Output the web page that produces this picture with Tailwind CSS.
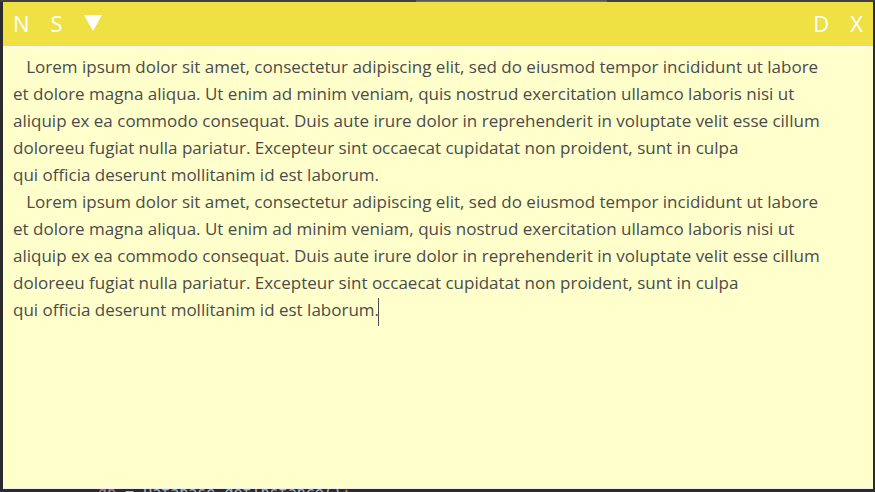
<!DOCTYPE html>
<html lang="en">
<head>
<meta charset="utf-8">
<title>Sticky note</title>
<script src="https://cdn.jsdelivr.net/npm/@tailwindcss/browser@4"></script>
</head>
<body class="relative flex h-screen flex-col overflow-hidden bg-[#2b2b2e] pt-[2px] pr-[2px] pb-[3px] pl-[3px] font-['Open_Sans','Noto_Sans',sans-serif]">
  <!-- editor window behind the note -->
  <div class="absolute inset-x-0 top-0 h-[2px] bg-[#3f3f41]"><div class="mr-[268px] ml-auto h-[2px] w-[191px] border-b border-[#4f7775] bg-[#58585a]"></div></div>
  <div class="absolute inset-x-0 bottom-0 h-[3px] overflow-hidden pl-[98px]" aria-hidden="true"><pre class="-mt-[5px] font-['DejaVu_Sans_Mono',monospace] text-[15px] leading-[18px] text-[#a9b7c6]"><span class="text-[#b08090]">db</span> = Database.getInstance()<span class="text-[#cc7832]">;</span></pre></div>

  <main class="relative flex min-h-0 flex-1 flex-col border-b border-[#f0f0f4] bg-[#ffffcc]">
    <header class="flex h-[44px] shrink-0 items-center justify-between bg-[#efe144] px-[10px] pb-[2px] text-[22px] leading-[28px] text-white">
      <div class="flex items-center gap-[21px]">
        <button type="button" aria-label="New note">N</button>
        <button type="button" aria-label="Save note">S</button>
        <button type="button" aria-label="More"><svg class="h-[16px] w-[18px]" viewBox="0 0 18 16" fill="currentColor"><path d="M0 0h18L9 16z"/></svg></button>
      </div>
      <div class="flex items-center gap-[21px]">
        <button type="button" aria-label="Delete note">D</button>
        <button type="button" aria-label="Close note">X</button>
      </div>
    </header>
    <textarea aria-label="Note text" spellcheck="false" class="block min-h-0 w-full flex-1 resize-none overflow-hidden border-t border-[#f4f4f4] bg-[#ffffcc] px-[10px] pt-[6px] text-[17px] leading-[27px] whitespace-pre text-[#4b4b4b] outline-none">   Lorem ipsum dolor sit amet, consectetur adipiscing elit, sed do eiusmod tempor incididunt ut labore
et dolore magna aliqua. Ut enim ad minim veniam, quis nostrud exercitation ullamco laboris nisi ut
aliquip ex ea commodo consequat. Duis aute irure dolor in reprehenderit in voluptate velit esse cillum
doloreeu fugiat nulla pariatur. Excepteur sint occaecat cupidatat non proident, sunt in culpa
qui officia deserunt mollitanim id est laborum.
   Lorem ipsum dolor sit amet, consectetur adipiscing elit, sed do eiusmod tempor incididunt ut labore
et dolore magna aliqua. Ut enim ad minim veniam, quis nostrud exercitation ullamco laboris nisi ut
aliquip ex ea commodo consequat. Duis aute irure dolor in reprehenderit in voluptate velit esse cillum
doloreeu fugiat nulla pariatur. Excepteur sint occaecat cupidatat non proident, sunt in culpa
qui officia deserunt mollitanim id est laborum.</textarea>
    <span class="absolute top-[296px] left-[375px] h-[28px] w-px bg-[#4b4b4b]" aria-hidden="true"></span>
  </main>
</body>
</html>
